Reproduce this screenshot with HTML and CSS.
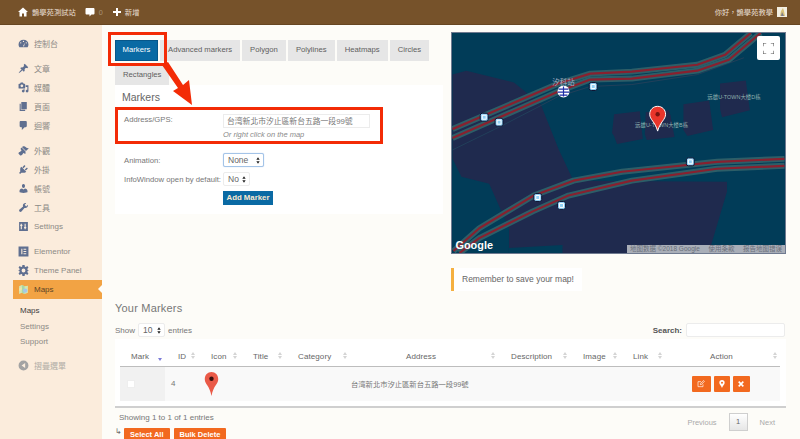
FILE: index.html
```html
<!DOCTYPE html>
<html lang="zh-Hant">
<head>
<meta charset="utf-8">
<title>Maps</title>
<link rel="stylesheet" href="styles.css">
</head>
<body>
<header class="topbar">
  <div class="top-item home">
    <svg class="ti" viewBox="0 0 20 20"><path d="M20 10L10 1 0 10h3v9h5v-6h4v6h5v-9z"/></svg>
    <span>鵲學苑測試站</span>
  </div>
  <div class="top-item comm">
    <svg class="ti" viewBox="0 0 20 20"><path d="M3 2h14c1 0 2 1 2 2v9c0 1-1 2-2 2h-4l-4 4v-4H3c-1 0-2-1-2-2V4c0-1 1-2 2-2z"/></svg>
    <span class="dim">0</span>
  </div>
  <div class="top-item add">
    <svg class="ti" viewBox="0 0 20 20"><path d="M8 2h4v6h6v4h-6v6H8v-6H2V8h6z"/></svg>
    <span>新增</span>
  </div>
  <div class="top-right">
    <span>你好，鵲學苑教學</span>
    <svg class="avatar" viewBox="0 0 10 10"><rect width="10" height="10" fill="#f3efe2"/><path d="M3 9l1-5 2-3 1 3 1 5z" fill="#d8c27a"/><path d="M4 9l1-4 2 4z" fill="#7c7c8c"/></svg>
  </div>
</header>

<div class="shell">
  <nav class="sidebar">
    <div class="group">
      <a class="item"><svg class="ic" viewBox="0 0 20 20"><path d="M10 3a9 9 0 0 0-9 9c0 2 .6 3.500 1.500 5h15c.9-1.500 1.500-3 1.500-5a9 9 0 0 0-9-9zm0 2a1.200 1.200 0 1 1 0 2.400A1.200 1.200 0 0 1 10 5zM5 7.500a1.200 1.200 0 1 1 0 2.400 1.200 1.200 0 0 1 0-2.400zm10 0a1.200 1.200 0 1 1 0 2.400 1.200 1.200 0 0 1 0-2.400zM9 15l3.500-6.500L11 15.500z"/></svg><span>控制台</span></a>
    </div>
    <div class="group">
      <a class="item"><svg class="ic" viewBox="0 0 20 20"><path d="M10.440 3.020l1.820-1.820 6.360 6.350-1.830 1.820c-1.050-.68-2.480-.57-3.410.36l-.75.75c-.92.93-1.040 2.350-.35 3.410l-1.830 1.820-2.410-2.410-2.800 2.790c-.42.42-3.380 2.710-3.800 2.290s1.860-3.390 2.280-3.810l2.790-2.790L4.100 9.360l1.830-1.820c1.050.69 2.480.57 3.400-.36l.75-.75c.93-.92 1.050-2.350.36-3.410z"/></svg><span>文章</span></a>
      <a class="item"><svg class="ic" viewBox="0 0 20 20"><path d="M13 11V4c0-.55-.45-1-1-1h-1.670L9 1H5L3.670 3H2c-.55 0-1 .45-1 1v7c0 .55.45 1 1 1h10c.55 0 1-.45 1-1zM7 4.500c1.380 0 2.500 1.120 2.500 2.500S8.380 9.500 7 9.500 4.500 8.380 4.500 7 5.620 4.500 7 4.500zM14 6h5v10.500c0 1.380-1.120 2.500-2.500 2.500S14 17.880 14 16.500s1.120-2.500 2.500-2.500c.17 0 .34.02.5.05V9h-3V6zm-4 8.050V13h2v3.500c0 1.380-1.120 2.500-2.500 2.500S7 17.880 7 16.500 8.120 14 9.500 14c.17 0 .34.02.5.05z"/></svg><span>媒體</span></a>
      <a class="item"><svg class="ic" viewBox="0 0 20 20"><path d="M6 15V2h10v13H6zm-1 1h8v2H3V5h2v11z"/></svg><span>頁面</span></a>
      <a class="item"><svg class="ic" viewBox="0 0 20 20"><path d="M5 2h9c1.100 0 2 .9 2 2v7c0 1.100-.9 2-2 2h-2l-5 5v-5H5c-1.100 0-2-.9-2-2V4c0-1.100.9-2 2-2z"/></svg><span>迴響</span></a>
    </div>
    <div class="group">
      <a class="item"><svg class="ic" viewBox="0 0 20 20"><path d="M14.480 11.060L7.410 3.990l1.500-1.500c.5-.56 2.300-.47 3.510.32 1.210.8 1.430 1.280 2.910 2.100 1.180.64 2.450 1.260 4.450.85zm-.71.71L6.700 4.700 4.930 6.470c-.39.39-.39 1.020 0 1.410l1.060 1.060c.39.39.39 1.030 0 1.420-.6.6-1.430 1.110-2.210 1.690-.35.26-.7.53-1.010.84C1.430 13.230.4 14.950 1.100 15.950l2.960 2.960c1 .7 2.720-.33 3.070-.68.31-.31.58-.66.84-1.010.58-.78 1.090-1.610 1.690-2.210.39-.39 1.030-.39 1.420 0l1.060 1.060c.39.39 1.020.39 1.410 0z"/></svg><span>外觀</span></a>
      <a class="item"><svg class="ic" viewBox="0 0 20 20"><path d="M13.110 4.360L9.870 7.600 8 5.730l3.240-3.240c.35-.34 1.050-.2 1.560.32.52.51.66 1.210.31 1.550zm-8 1.770l.91-1.120 9.010 9.010-1.190.84c-.71.71-2.630 1.160-3.820 1.160H6.140L4.900 17.260c-.59.59-1.540.59-2.120 0-.59-.58-.59-1.530 0-2.120l1.240-1.240v-3.880c0-1.130.4-3.190 1.090-3.890zm7.260 3.970l3.240-3.240c.34-.35 1.040-.21 1.550.31.52.51.66 1.210.31 1.550l-3.240 3.250z"/></svg><span>外掛</span></a>
      <a class="item"><svg class="ic" viewBox="0 0 20 20"><path d="M10 9.250c-2.270 0-2.730-3.440-2.730-3.440C7 4.020 7.820 2 9.970 2c2.160 0 2.980 2.020 2.710 3.810 0 0-.41 3.440-2.680 3.440zm0 2.570L12.720 10c2.390 0 4.520 2.330 4.520 4.530v2.490s-3.650 1.130-7.240 1.130c-3.650 0-7.240-1.130-7.240-1.130v-2.490c0-2.250 1.940-4.480 4.470-4.480z"/></svg><span>帳號</span></a>
      <a class="item"><svg class="ic" viewBox="0 0 20 20"><path d="M16.680 9.770c-1.340 1.340-3.300 1.670-4.950.99l-5.410 6.520c-.99.99-2.590.99-3.580 0s-.99-2.590 0-3.570l6.520-5.420c-.68-1.650-.35-3.610.99-4.950 1.280-1.280 3.120-1.620 4.720-1.060l-2.890 2.890 2.820 2.820 2.860-2.870c.53 1.580.18 3.390-1.080 4.650z"/></svg><span>工具</span></a>
      <a class="item"><svg class="ic" viewBox="0 0 20 20"><path fill-rule="evenodd" d="M2 2h16v16H2zM5 5v2H4v2h1v6h2V9h1V7H7V5zm7 0v6h-1v2h1v2h2v-2h1v-2h-1V5z"/></svg><span>Settings</span></a>
    </div>
    <div class="group">
      <a class="item"><svg class="ic" viewBox="0 0 20 20"><path fill-rule="evenodd" d="M1 1h18v18H1zM6 5v10h2V5zm4 0v2h5V5zm0 4v2h5V9zm0 4v2h5v-2z"/></svg><span>Elementor</span></a>
      <a class="item"><svg class="ic" viewBox="0 0 20 20"><path fill-rule="evenodd" d="M8 0h4l.5 3 1.800.8L17 2l2 3-2 2 .4 2 2.600 1-2.600 1-.4 2 2 2-2 3-2.700-1.800-1.800.8-.5 3H8l-.5-3-1.800-.8L3 18l-2-3 2-2-.4-2L0 10l2.600-1L3 7 1 5l2-3 2.700 1.800L7.500 3zM10 6.500a3.500 3.500 0 1 0 0 7 3.500 3.500 0 0 0 0-7z"/></svg><span>Theme Panel</span></a>
      <a class="item current">
        <svg class="ic" viewBox="0 0 20 20"><path d="M2 4l5-2 5 2 6-1v13l-6 2-5-2-5 2z" fill="#d6e6b0"/><path d="M7 2l5 2v14l-5-2z" fill="#a9d8a6"/><circle cx="13" cy="12" r="4" fill="#a7c7e8"/><path d="M2 8l5-2v4l-5 3z" fill="#f1e5a8"/></svg>
        <span>Maps</span><i class="notch"></i>
      </a>
      <div class="submenu">
        <a class="sub active">Maps</a>
        <a class="sub">Settings</a>
        <a class="sub">Support</a>
      </div>
    </div>
    <a class="item collapse"><svg class="ic" viewBox="0 0 20 20"><path fill-rule="evenodd" d="M10 1a9 9 0 1 1 0 18 9 9 0 0 1 0-18zm3 4.500L6.500 10l6.500 4.500z"/></svg><span>摺疊選單</span></a>
  </nav>

  <main class="main">
    <div class="top-row">
      <section class="left-col">
        <div class="tabs">
          <a class="tab on">Markers</a>
          <a class="tab">Advanced markers</a>
          <a class="tab">Polygon</a>
          <a class="tab">Polylines</a>
          <a class="tab">Heatmaps</a>
          <a class="tab">Circles</a>
          <a class="tab">Rectangles</a>
        </div>
        <div class="panel">
          <h3 class="panel-title">Markers</h3>
          <div class="form-grid">
            <label class="lab addr-lab">Address/GPS:</label>
            <div class="addr-field">
              <div class="text-input">台湾新北市汐止區新台五路一段99號</div>
              <em class="hint">Or right click on the map</em>
            </div>
            <label class="lab">Animation:</label>
            <div><div class="sel focus"><span>None</span><svg class="updown" viewBox="0 0 6 10"><path d="M3 0l2.500 4h-5zM3 10L.5 6h5z"/></svg></div></div>
            <label class="lab">InfoWindow open by default:</label>
            <div><div class="sel small"><span>No</span><svg class="updown" viewBox="0 0 6 10"><path d="M3 0l2.500 4h-5zM3 10L.5 6h5z"/></svg></div></div>
            <span></span>
            <div><a class="btn-blue">Add Marker</a></div>
          </div>
        </div>
      </section>

      <section class="right-col">
        <div class="map">
          <svg class="map-svg" viewBox="451 33 335 222">
            <rect x="451" y="33" width="335" height="222" fill="#013c58"/>
            <path d="M451 75L465 71 513 83 540 105 558 150 573 182 728 183 728 193 712 247 712 255 508 255 508 230 488 185 460 178 451 160z" fill="#1f2a4e"/>
            <path d="M508 250L562 247 562 255 508 255z" fill="#013c58"/>
            <g fill="#1f2a4e">
              <path d="M614 115l26-3 3 28-26 5-3-8-2-3z"/>
              <path d="M646 113l23-2 2 5 4 22-28 3-2-6z"/>
              <path d="M684 105l26-4 4 30-26 6-4-6z"/>
              <path d="M721 84l26-3 4 30-28 7-2-8z"/>
            </g>
            <path d="M451 151L500 127 558 97 590 87 632 85 698 75 745 58" fill="none" stroke="#21405a" stroke-width="1"/>
            <g fill="none" stroke-linejoin="round">
              <g stroke="#2d5e68" stroke-width="6">
                <path d="M451 130L558 84 590 74 632 72 698 65 726 55 752 33"/>
                <path d="M451 139L558 92 590 80 632 79 698 71 730 60 762 33"/>
                <path d="M452 253L478 230 533 197 573 182 622 173 718 163 786 160"/>
                <path d="M458 255L478 240 532 213 568 197 632 182 718 170 786 167"/>
              </g>
              <g stroke="#88212f" stroke-width="2.200">
                <path d="M451 130L558 84 590 74 632 72 698 65 726 55 752 33"/>
                <path d="M451 139L558 92 590 80 632 79 698 71 730 60 762 33"/>
                <path d="M452 253L478 230 533 197 573 182 622 173 718 163 786 160"/>
                <path d="M458 255L478 240 532 213 568 197 632 182 718 170 786 167"/>
              </g>
            </g>
            <g class="bus">
              <g transform="translate(593 87)"><rect x="-4" y="-4" width="8" height="8" rx="2"/><path d="M-2-2h4v4h-4z"/></g>
              <g transform="translate(483 118)"><rect x="-4" y="-4" width="8" height="8" rx="2"/><path d="M-2-2h4v4h-4z"/></g>
              <g transform="translate(498 123)"><rect x="-4" y="-4" width="8" height="8" rx="2"/><path d="M-2-2h4v4h-4z"/></g>
              <g transform="translate(691 163)"><rect x="-4" y="-4" width="8" height="8" rx="2"/><path d="M-2-2h4v4h-4z"/></g>
              <g transform="translate(537 199)"><rect x="-4" y="-4" width="8" height="8" rx="2"/><path d="M-2-2h4v4h-4z"/></g>
              <g transform="translate(561 207)"><rect x="-4" y="-4" width="8" height="8" rx="2"/><path d="M-2-2h4v4h-4z"/></g>
            </g>
            <circle cx="563" cy="92" r="6" fill="#fff"/>
            <path d="M558 89h10v1.200h-10zM557 92h12v1.200h-12zM559 95h8v1.200h-8zM562.400 87h1.200v10h-1.200z" fill="#1f2fa8"/>
            <text class="station" x="563" y="85" text-anchor="middle">汐科站</text>
            <text class="poi" x="735" y="100" text-anchor="middle">远雄U-TOWN大楼D栋</text>
            <text class="poi" x="662" y="128" text-anchor="middle">远雄U-TOWN大楼B栋</text>
            <path d="M658 107c-4.500 0-8 3.400-8 8 0 5.500 5.500 7.500 8 17 2.500-9.500 8-11.500 8-17 0-4.600-3.500-8-8-8z" fill="#e9352b" stroke="#fff" stroke-width="1"/>
            <circle cx="658" cy="115" r="2.200" fill="#7a1410"/>
            <text class="google" x="454" y="251">Google</text>
          </svg>
          <button class="fs" aria-label="全屏"><svg viewBox="0 0 12 12"><path d="M0 3.500V0h3.500M8.500 0H12v3.500M12 8.500V12H8.500M3.500 12H0V8.500" fill="none" stroke="#555" stroke-width="1.200"/></svg></button>
          <div class="attrib"><span>地图数据 ©2018 Google</span><span>使用条款</span><span>报告地图错误</span></div>
        </div>
        <div class="notice">Remember to save your map!</div>
      </section>
    </div>

    <section class="markers">
      <h3 class="sec-title">Your Markers</h3>
      <div class="tools">
        <div class="show">Show <div class="sel tiny"><span>10</span><svg class="updown" viewBox="0 0 6 10"><path d="M3 0l2.500 4h-5zM3 10L.5 6h5z"/></svg></div> entries</div>
        <div class="search"><b>Search:</b><div class="search-box"></div></div>
      </div>
      <div class="table-wrap">
        <table class="tbl">
          <colgroup>
            <col class="c1"><col class="c2"><col class="c3"><col class="c4"><col class="c5"><col class="c6"><col class="c7"><col class="c8"><col class="c9"><col class="c10">
          </colgroup>
          <thead>
            <tr>
              <th class="first">Mark<i class="sort-on"></i></th>
              <th>ID<i class="sort"></i></th>
              <th>Icon<i class="sort"></i></th>
              <th>Title<i class="sort"></i></th>
              <th>Category<i class="sort"></i></th>
              <th class="ctr">Address<i class="sort"></i></th>
              <th>Description<i class="sort"></i></th>
              <th>Image<i class="sort"></i></th>
              <th>Link<i class="sort"></i></th>
              <th class="ctr last">Action<i class="sort"></i></th>
            </tr>
          </thead>
          <tbody>
            <tr>
              <td class="mark"><span class="check"></span></td>
              <td class="id">4</td>
              <td><svg class="row-pin" viewBox="0 0 14 25"><path d="M7 0C3 0 0 3.200 0 7.500c0 5 5 6.500 7 17.500 2-11 7-12.500 7-17.500C14 3.200 11 0 7 0z" fill="#ea5a48"/><circle cx="7" cy="7" r="2.300" fill="#3a0f0c"/></svg></td>
              <td></td>
              <td></td>
              <td class="addr">台湾新北市汐止區新台五路一段99號</td>
              <td></td>
              <td></td>
              <td></td>
              <td class="ctr actions">
                <a class="act a1"><svg viewBox="0 0 12 12"><path d="M9 6.500V10H1.500V2.500H6M5 7l.5-2L10 .8l1.200 1.200L7 6.500z" fill="none" stroke="#fff" stroke-width="1"/></svg></a>
                <a class="act a2"><svg viewBox="0 0 12 12"><path fill="#fff" fill-rule="evenodd" d="M6 0a4 4 0 0 1 4 4c0 2.500-2.500 4-4 8-1.500-4-4-5.500-4-8a4 4 0 0 1 4-4zm0 2.500a1.500 1.500 0 1 0 0 3 1.500 1.500 0 0 0 0-3z"/></svg></a>
                <a class="act a3"><svg viewBox="0 0 12 12"><path d="M2.500 2.500l7 7M9.500 2.500l-7 7" stroke="#fff" stroke-width="2.400"/></svg></a>
              </td>
            </tr>
          </tbody>
        </table>
      </div>
      <div class="foot">
        <div class="foot-left">
          <div class="info">Showing 1 to 1 of 1 entries</div>
          <div class="bulk"><span class="arrow-ret">↳</span><a class="btn-or">Select All</a><a class="btn-or">Bulk Delete</a></div>
        </div>
        <div class="pager"><span>Previous</span><span class="page">1</span><span>Next</span></div>
      </div>
    </section>
  </main>
</div>

<div class="hl hl-tab"></div>
<div class="hl hl-addr"></div>
<svg class="hl-arrow" viewBox="0 0 800 439"><path d="M162 65L168 62 183 85 189 80 192 105 173 91 178 88z" fill="#f32b06"/></svg>
</body>
</html>
```

FILE: styles.css
```css
* { box-sizing: border-box; }
html, body { margin: 0; padding: 0; height: 439px; overflow: hidden; }
body {
  font-family: "Liberation Sans", "Noto Sans CJK TC", sans-serif;
  font-size: 8px;
  color: #666;
  background: #fdfcf8;
  position: relative;
}
a { text-decoration: none; color: inherit; }

/* Top bar */
.topbar {
  height: 25px;
  background: #76522a;
  border-bottom: 1px solid #664622;
  display: flex;
  align-items: center;
  color: #e8dfd2;
  font-size: 7.300px;
  padding-left: 18px;
}
.top-item { display: flex; align-items: center; gap: 4px; }
.comm { margin-left: 9px; gap: 4px; }
.add { margin-left: 9px; gap: 3px; }
.ti { width: 10px; height: 10px; fill: #fff; }
.dim { color: #a89478; }
.top-right { margin-left: auto; display: flex; align-items: center; gap: 4px; padding-right: 13px; }
.avatar { width: 10px; height: 10px; }

/* Shell */
.shell { display: flex; height: 414px; }

/* Sidebar */
.sidebar {
  width: 102px;
  flex: none;
  background: #fbecdc;
  padding-top: 8.500px;
  color: #8c8a86;
}
.group { margin-bottom: 6.200px; }
.item {
  display: flex;
  align-items: center;
  height: 19px;
  padding-left: 18px;
  gap: 5px;
  position: relative;
}
.ic { width: 11px; height: 11px; fill: #5f6f90; flex: none; }
.current {
  margin-left: 13px;
  padding-left: 5px;
  background: #f2a344;
  color: #5c4526;
}
.notch {
  position: absolute;
  right: 0;
  top: 5px;
  border: 4.500px solid transparent;
  border-right-color: #fdfcf8;
  border-left-width: 0;
}
.submenu { padding: 4px 0 0 20px; }
.sub { display: block; height: 15.500px; line-height: 15.500px; }
.sub.active { color: #3c3c3c; }
.collapse { color: #b0aca6; }
.collapse .ic { fill: #a3a3a3; }

/* Main */
.main { flex: 1; padding: 7px 14px 0 13px; min-width: 0; }
.top-row { display: flex; gap: 8px; }
.left-col { width: 328px; padding-top: 8px; }
.right-col { width: 335px; }

/* Tabs */
.tabs { display: flex; flex-wrap: wrap; gap: 4px 2px; width: 320px; }
.tab {
  height: 20.500px;
  line-height: 20.500px;
  padding: 0 8px;
  background: #e6e6e6;
  color: #5e5e5e;
  font-size: 7.700px;
}
.tab.on { background: #0a6aa4; color: #fff; width: 43px; padding: 0; text-align: center; border: 1px solid #07578a; line-height: 18.500px; }

/* Panel */
.panel { background: #fff; height: 129px; padding: 6px 9px; }
.panel-title { margin: 0; font-weight: 400; font-size: 10.500px; line-height: 13px; color: #666; margin-left: -2px; }
.form-grid {
  display: grid;
  grid-template-columns: 99px 1fr;
  margin-top: 10px;
  color: #777;
}
.lab { font-size: 7.700px; line-height: 15px; white-space: nowrap; }
.addr-lab { line-height: 11px; }
.addr-field { height: 39px; }
.form-grid > div { margin-bottom: 5px; }
.form-grid > .addr-field { margin-bottom: 0; }
.text-input {
  width: 147px;
  height: 14px;
  line-height: 13px;
  border: 1px solid #ececec;
  background: #fff;
  padding-left: 3px;
  color: #777;
  font-size: 7.800px;
}
.hint { display: block; color: #8a8a8a; font-size: 7.500px; line-height: 12px; margin-top: 1px; }
.sel {
  display: inline-flex;
  align-items: center;
  justify-content: space-between;
  height: 14px;
  padding: 0 3px 0 4px;
  background: #fff;
  border: 1px solid #ececec;
  border-radius: 2px;
  color: #666;
  width: 27px;
  font-size: 8.500px;
}
.sel.focus { width: 41px; border-color: #a4c4e8; box-shadow: 0 0 1px #a4c4e8; padding-left: 4px; }
.sel.tiny { width: 27px; vertical-align: middle; margin: 0 1px; }
.updown { width: 4px; height: 7px; fill: #222; }
.btn-blue {
  display: block;
  width: 50px;
  height: 14px;
  line-height: 14px;
  background: #0a6aa4;
  color: #fbe9cf;
  text-align: center;
  font-weight: 700;
  font-size: 7.800px;
}

/* Map */
.map { position: relative; height: 222px; background: #013c58; border: 1px solid #6f7a90; overflow: hidden; }
.map-svg { display: block; width: 100%; height: 100%; }
.bus rect { fill: #8fd0f5; stroke: #0b1230; stroke-width: 1; }
.bus path { fill: none; stroke: #fff; stroke-width: 1; }
.station { font-size: 7.500px; fill: #a8aec4; font-family: "Noto Sans CJK SC", sans-serif; }
.poi { font-size: 5.500px; fill: #8fb0ae; font-family: "Liberation Sans", "Noto Sans CJK SC", sans-serif; }
.google { font-size: 11px; font-weight: 700; fill: #fff; font-family: "Liberation Sans", sans-serif; }
.fs {
  position: absolute;
  right: 5px;
  top: 3px;
  width: 23px;
  height: 24px;
  background: #fff;
  border: 0;
  border-radius: 2px;
  padding: 6px;
}
.fs svg { display: block; width: 11px; height: 11px; }
.attrib {
  position: absolute;
  right: 0;
  bottom: 0;
  width: 158px;
  height: 8px;
  display: flex;
  justify-content: space-between;
  padding: 0 3px;
  background: #a9aeb8;
  color: #6a6f7a;
  font-size: 6.500px;
  line-height: 8px;
  font-family: "Liberation Sans", "Noto Sans CJK SC", sans-serif;
}

/* Notice */
.notice {
  margin-top: 14px;
  width: 131px;
  height: 23px;
  line-height: 23px;
  background: #fff;
  border-left: 3px solid #f5b041;
  padding-left: 8px;
  font-size: 8.500px;
  color: #666;
  white-space: nowrap;
}

/* Markers */
.markers { margin-top: 10px; }
.sec-title { margin: 0; font-weight: 400; font-size: 11px; letter-spacing: .2px; line-height: 14px; color: #777; }
.tools { display: flex; justify-content: space-between; align-items: center; height: 14px; margin-top: 8px; color: #777; font-size: 8px; }
.show { display: flex; align-items: center; gap: 2px; }
.search { display: flex; align-items: center; gap: 4px; padding-right: 1px; }
.search b { color: #555; font-size: 8px; }
.search-box { width: 99px; height: 14px; border: 1px solid #ececec; background: #fff; border-radius: 2px; }
.table-wrap {
  margin-top: 2px;
  background: #fff;
  padding: 0 6px 5px 5px;
  border-bottom: 2px solid #cfcfcf;
  height: 69px;
}
.tbl { table-layout: fixed; border-collapse: collapse; width: 660px; font-size: 8px; color: #777; }
.c1 { width: 45px; } .c2 { width: 33px; } .c3 { width: 42px; } .c4 { width: 45px; } .c5 { width: 65px; }
.c6 { width: 148px; } .c7 { width: 72px; } .c8 { width: 50px; } .c9 { width: 45px; } .c10 { width: 115px; }
.tbl th {
  height: 27px;
  font-weight: 400;
  text-align: left;
  padding: 8px 0 0 13px;
  color: #666;
  border-bottom: 1px solid #bdbdbd;
  position: relative;
  letter-spacing: .1px;
}
.tbl th.first { padding-left: 11px; }
.tbl th.ctr { text-align: center; padding: 8px 6px 0 0; }
.tbl th.last { padding-right: 2px; }
.tbl td { height: 35px; background: #f9f9f9; padding: 0 0 0 13px; }
.tbl td.ctr { text-align: center; padding: 0 4px 0 0; }
.tbl td.mark { background: #f1f1f1; padding: 0 0 0 7px; }
.tbl td.id { padding-left: 6px; }
.tbl td.addr { padding-left: 1px; font-size: 7.300px; white-space: nowrap; }
.check { display: block; width: 8px; height: 8px; background: #fff; border: 1px solid #eee; }
.sort, .sort-on { position: absolute; right: 3px; top: 13px; width: 4px; height: 8px; }
.sort::before, .sort::after { content: ""; position: absolute; left: 0; border: 2px solid transparent; }
.sort::before { top: -2px; border-bottom: 3px solid #d4d4d4; }
.sort::after { top: 4px; border-top: 3px solid #d4d4d4; }
.sort-on::after { content: ""; position: absolute; left: 0; top: 6px; border: 2px solid transparent; border-top: 3px solid #7c7cd8; }
.row-pin { display: block; width: 15px; height: 24px; margin-left: -7px; }
.actions { white-space: nowrap; font-size: 0; }
.act {
  display: inline-flex;
  align-items: center;
  justify-content: center;
  height: 16px;
  background: #f2691f;
  border-radius: 1px;
  margin-left: 3px;
  vertical-align: middle;
}
.act svg { width: 8px; height: 8px; }
.act.a1 { width: 19px; margin-left: 0; }
.act.a2 { width: 16px; }
.act.a3 { width: 17px; }

.foot { display: flex; justify-content: space-between; }
.foot-left { flex: 1; }
.info { padding: 5px 0 0 4px; line-height: 10px; color: #777; font-size: 8px; }
.bulk { display: flex; align-items: flex-start; gap: 4px; margin-top: 5px; }
.arrow-ret { width: 5px; margin-left: 0; color: #666; font-size: 8px; line-height: 8px; }
.btn-or {
  height: 20px;
  line-height: 13px;
  padding: 0 6px;
  background: #f2691f;
  border-radius: 1px 1px 0 0;
  color: #fff;
  font-weight: 700;
  font-size: 7.500px;
}
.pager { display: flex; align-items: center; gap: 12px; height: 18px; margin-top: 5px; padding-right: 11px; color: #aaa; font-size: 7.500px; }
.page {
  width: 19px;
  height: 18px;
  line-height: 16px;
  text-align: center;
  border: 1px solid #cfcfcf;
  background: linear-gradient(#fff, #e6e6e6);
  color: #666;
}

/* Red annotations laid over the screenshot */
.hl { position: absolute; border: 3.500px solid #f32b06; }
.hl-tab { left: 108px; top: 32px; width: 59px; height: 34px; }
.hl-addr { left: 115px; top: 107px; width: 268px; height: 37px; }
.hl-arrow { position: absolute; left: 0; top: 0; width: 800px; height: 439px; pointer-events: none; }
```
